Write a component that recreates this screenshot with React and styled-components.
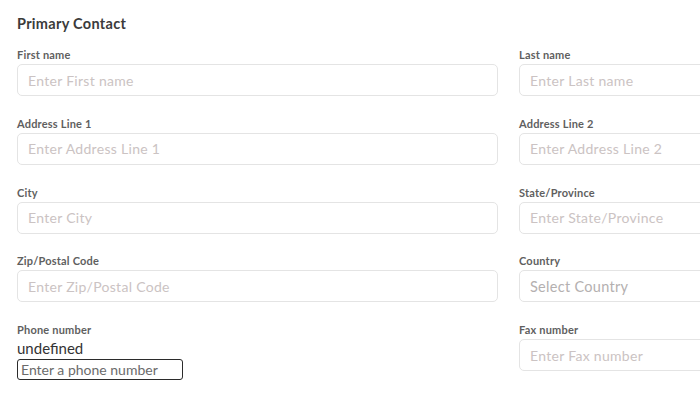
import React from "react";
import styled, { createGlobalStyle } from "styled-components";

const Global = createGlobalStyle`
  html, body { margin: 0; padding: 0; background: #fff; }
  body { font-family: "Lato", "Open Sans", sans-serif; overflow: hidden; }
`;

const Page = styled.div`
  width: 1100px;
  padding: 14px 17px;
  box-sizing: border-box;
`;

const Title = styled.h2`
  margin: 0 0 13px;
  font-size: 14.5px;
  line-height: 20px;
  font-weight: 700;
  letter-spacing: 0.3px;
  color: #3b3b3b;
`;

const Grid = styled.div`
  display: grid;
  grid-template-columns: 481px 481px;
  column-gap: 21px;
  row-gap: 19.75px;
`;

const Field = styled.div`
  display: flex;
  flex-direction: column;
  gap: 2px;
`;

const Label = styled.label`
  font-size: 11px;
  line-height: 15px;
  font-weight: 700;
  letter-spacing: 0.2px;
  color: #5f5f5f;
`;

const Input = styled.input`
  box-sizing: border-box;
  height: 32px;
  width: 100%;
  border: 1px solid #e4e4e4;
  border-radius: 5px;
  padding: 0 10px;
  font-family: inherit;
  font-size: 14px;
  letter-spacing: 0.3px;
  color: #333;
  background: #fff;
  outline: none;
  &::placeholder { color: #cbc3c3; }
`;

const Select = styled.div`
  box-sizing: border-box;
  height: 32px;
  border: 1px solid #e4e4e4;
  border-radius: 5px;
  padding: 0 10px;
  display: flex;
  align-items: center;
  font-size: 14.5px;
  letter-spacing: 0.3px;
  color: #b4b0b0;
`;

const PhoneField = styled.div`
  display: flex;
  flex-direction: column;
`;

const Undefined = styled.div`
  font-size: 15px;
  line-height: 18px;
  color: #333;
  margin-top: 2px;
`;

const PhoneInput = styled.input`
  box-sizing: border-box;
  width: 166px;
  height: 21px;
  margin-top: 2px;
  border: 1.5px solid #2b2b2b;
  border-radius: 3px;
  padding: 0 3px;
  font-family: inherit;
  font-size: 14px;
  outline: none;
  &::placeholder { color: #6b6b6b; }
`;

const fields = [
  ["First name", "Enter First name"],
  ["Last name", "Enter Last name"],
  ["Address Line 1", "Enter Address Line 1"],
  ["Address Line 2", "Enter Address Line 2"],
  ["City", "Enter City"],
  ["State/Province", "Enter State/Province"],
  ["Zip/Postal Code", "Enter Zip/Postal Code"],
];

export default function App() {
  return (
    <Page>
      <Global />
      <Title>Primary Contact</Title>
      <Grid>
        {fields.map(([l, p]) => (
          <Field key={l}>
            <Label>{l}</Label>
            <Input placeholder={p} />
          </Field>
        ))}
        <Field>
          <Label>Country</Label>
          <Select>Select Country</Select>
        </Field>
        <PhoneField>
          <Label>Phone number</Label>
          <Undefined>undefined</Undefined>
          <PhoneInput placeholder="Enter a phone number" />
        </PhoneField>
        <Field>
          <Label>Fax number</Label>
          <Input placeholder="Enter Fax number" />
        </Field>
      </Grid>
    </Page>
  );
}
